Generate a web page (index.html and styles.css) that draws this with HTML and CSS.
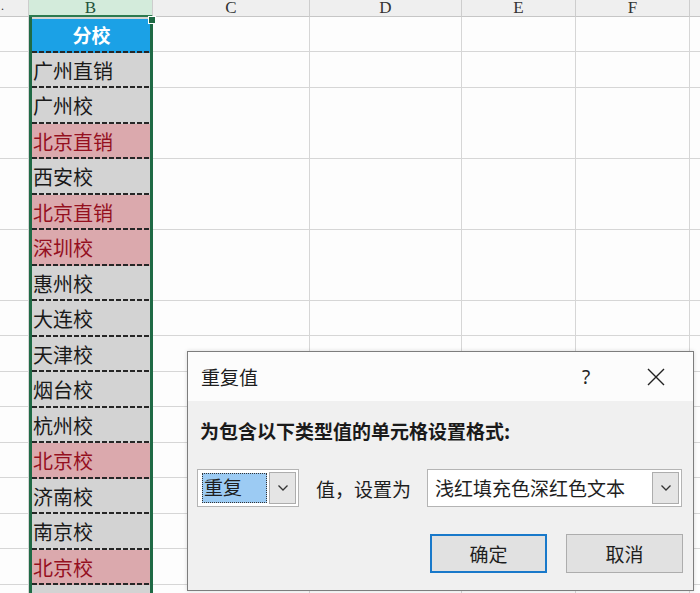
FILE: index.html
```html
<!DOCTYPE html>
<html lang="zh-CN">
<head>
<meta charset="utf-8">
<title>重复值</title>
<link rel="stylesheet" href="styles.css">
</head>
<body>
<div class="sheet">
  <div class="col col-a">
    <div class="hd">.</div>
    <div class="grid-body"></div>
  </div>
  <div class="col col-b">
    <div class="hd hd-sel">B</div>
    <div class="sel">
      <div class="bc head">分校</div>
      <div class="bc">广州直销</div>
      <div class="bc">广州校</div>
      <div class="bc dup">北京直销</div>
      <div class="bc">西安校</div>
      <div class="bc dup">北京直销</div>
      <div class="bc dup">深圳校</div>
      <div class="bc">惠州校</div>
      <div class="bc">大连校</div>
      <div class="bc">天津校</div>
      <div class="bc">烟台校</div>
      <div class="bc">杭州校</div>
      <div class="bc dup">北京校</div>
      <div class="bc">济南校</div>
      <div class="bc">南京校</div>
      <div class="bc dup">北京校</div>
      <div class="bc">重庆校</div>
      <span class="handle"></span>
    </div>
  </div>
  <div class="col col-c">
    <div class="hd">C</div>
    <div class="grid-body"></div>
  </div>
  <div class="col col-d">
    <div class="hd">D</div>
    <div class="grid-body"></div>
  </div>
  <div class="col col-e">
    <div class="hd">E</div>
    <div class="grid-body"></div>
  </div>
  <div class="col col-f">
    <div class="hd">F</div>
    <div class="grid-body"></div>
  </div>
  <div class="col col-g">
    <div class="hd"></div>
    <div class="grid-body"></div>
  </div>
</div>

<div class="dialog">
  <div class="titlebar">
    <span class="title">重复值</span>
    <span class="help">?</span>
    <span class="close">
      <svg width="18" height="18" viewBox="0 0 18 18"><path d="M1 1 L17 17 M17 1 L1 17" stroke="#222" stroke-width="1.4" fill="none"/></svg>
    </span>
  </div>
  <div class="dbody">
    <div class="prompt">为包含以下类型值的单元格设置格式:</div>
    <div class="controls">
      <div class="combo combo-type">
        <span class="combo-text selected">重复</span>
        <span class="drop">
          <svg width="12" height="8" viewBox="0 0 12 8"><path d="M1.5 1.5 L6 6 L10.5 1.5" stroke="#333" stroke-width="1.3" fill="none"/></svg>
        </span>
      </div>
      <span class="mid">值，设置为</span>
      <div class="combo combo-fmt">
        <span class="combo-text">浅红填充色深红色文本</span>
        <span class="drop">
          <svg width="12" height="8" viewBox="0 0 12 8"><path d="M1.5 1.5 L6 6 L10.5 1.5" stroke="#333" stroke-width="1.3" fill="none"/></svg>
        </span>
      </div>
    </div>
    <div class="buttons">
      <button class="btn btn-ok">确定</button>
      <button class="btn">取消</button>
    </div>
  </div>
</div>
</body>
</html>
```

FILE: styles.css
```css
* { box-sizing: border-box; }

html, body {
  margin: 0;
  padding: 0;
  width: 700px;
  height: 593px;
  overflow: hidden;
  background: #ffffff;
  font-family: "Noto Sans CJK SC", "Noto Sans", sans-serif;
}

.sheet {
  display: flex;
  width: 700px;
  height: 593px;
  overflow: hidden;
}

.col {
  display: flex;
  flex-direction: column;
  flex: none;
}

.col-a { width: 29px; }
.col-b { width: 124px; }
.col-c { width: 157px; }
.col-d { width: 152px; }
.col-e { width: 114px; }
.col-f { width: 114px; }
.col-g { width: 14px; }

.hd {
  height: 17px;
  flex: none;
  background: #efefef;
  border-right: 1px solid #cdcdcd;
  border-bottom: 1px solid #c6c6c6;
  font-family: "Liberation Serif", "DejaVu Serif", serif;
  font-size: 17px;
  line-height: 16px;
  color: #333333;
  text-align: center;
}

.col-a .hd {
  text-align: left;
  padding-left: 1px;
  font-size: 12px;
  line-height: 12px;
}

.hd-sel {
  background: #d3ebdb;
  color: #24533a;
  border-bottom: 2px solid #2c7a4e;
}

.grid-body {
  flex: 1;
  border-right: 1px solid #d6d6d6;
  background: repeating-linear-gradient(to bottom, #fdfdfd 0 34.5px, #d6d6d6 34.5px 35.5px);
}

.col-g .grid-body,
.col-g .hd { border-right: none; }

.sel {
  position: relative;
  flex: 1;
  border-left: 3px solid #1f6a45;
  border-right: 3px solid #1f6a45;
  background: #d4d4d4;
}

.bc {
  position: relative;
  height: 35.5px;
  padding-left: 1px;
  font-size: 20px;
  line-height: 35px;
  color: #1a1a1a;
  white-space: nowrap;
  background: #d3d3d3;
}

.bc::after {
  content: "";
  position: absolute;
  left: 0;
  right: 0;
  bottom: 0;
  height: 2px;
  background: repeating-linear-gradient(to right, #262626 0 5px, transparent 5px 7px);
}

.bc.head {
  background: #1ba1e6;
  color: #ffffff;
  font-weight: bold;
  text-align: center;
  border-top: 2px solid #d4d4d4;
  line-height: 31px;
  font-size: 19px;
}

.bc.dup {
  background: #dba9ad;
  color: #95101f;
}

.handle {
  position: absolute;
  right: -6px;
  top: -1px;
  width: 8px;
  height: 8px;
  background: #1f6a45;
  border: 1px solid #ffffff;
}

/* dialog */
.dialog {
  position: absolute;
  left: 187px;
  top: 351px;
  width: 507px;
  height: 240px;
  border: 1px solid #7d7d7d;
  background: #f0f0f0;
  display: flex;
  flex-direction: column;
  box-shadow: 0 0 4px rgba(0, 0, 0, 0.15);
}

.titlebar {
  height: 49px;
  flex: none;
  background: #fcfcfc;
  display: flex;
  align-items: center;
  padding-left: 13px;
}

.title {
  font-size: 19px;
  color: #1e1e1e;
  flex: 1;
}

.help {
  font-family: "Noto Sans", sans-serif;
  font-size: 19px;
  color: #222;
  width: 18px;
  margin-right: 47px;
}

.close {
  display: flex;
  align-items: center;
  margin-right: 28px;
}

.dbody {
  flex: 1;
  padding: 19px 10px 0 12px;
}

.prompt {
  font-size: 19px;
  font-weight: bold;
  line-height: 22px;
  color: #1a1a1a;
}

.controls {
  display: flex;
  align-items: center;
  margin-top: 27px;
  margin-left: -3px;
}

.combo {
  height: 38px;
  background: #ffffff;
  border: 1px solid #b4b4b4;
  display: flex;
  align-items: center;
  padding: 3px 2px 3px 4px;
}

.combo-type { width: 102px; }
.combo-fmt { width: 255px; padding-left: 7px; }

.combo-text {
  flex: 1;
  font-size: 19px;
  color: #1e1e1e;
  white-space: nowrap;
  line-height: 28px;
}

.combo-text.selected {
  align-self: stretch;
  background: #9ccbf3;
  border: 1px dotted #333;
  line-height: 26px;
  padding-left: 1px;
  margin-right: 2px;
}

.drop {
  width: 27px;
  height: 32px;
  flex: none;
  background: #e5e5e5;
  border: 1px solid #adadad;
  display: flex;
  align-items: center;
  justify-content: center;
}

.mid {
  font-size: 19px;
  color: #1e1e1e;
  margin: 0 16px 0 17px;
  white-space: nowrap;
}

.buttons {
  display: flex;
  justify-content: flex-end;
  gap: 19px;
  margin-top: 27px;
}

.btn {
  width: 117px;
  height: 39px;
  background: #e1e1e1;
  border: 1px solid #adadad;
  font-family: "Noto Sans CJK SC", "Noto Sans", sans-serif;
  font-size: 19px;
  color: #1e1e1e;
  padding: 0;
}

.btn-ok {
  border: 2px solid #1979ca;
}
```
